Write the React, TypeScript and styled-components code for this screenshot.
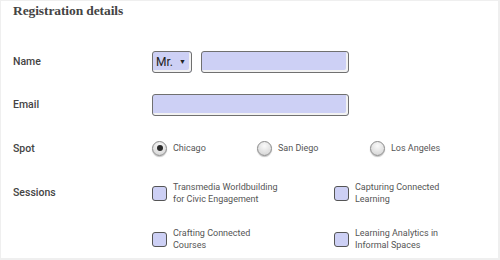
import React from 'react';
import styled, { createGlobalStyle } from 'styled-components';

const GlobalStyle = createGlobalStyle`
    html, body {
        margin: 0;
        padding: 0;
        background-color: #EFEFEF;
    }
    body {
        font-family: Roboto, "Noto Sans", sans-serif;
    }
`;

const Card = styled.div`
    margin: 1px;
    width: 497px;
    height: 257px;
    background-color: #FFFFFF;
    padding-left: 12px;
    box-sizing: border-box;
    overflow: hidden;
`;

const Title = styled.h2`
    margin: 0;
    height: 39px;
    padding-top: 2px;
    box-sizing: border-box;
    font-family: "Liberation Serif", serif;
    font-size: 13.5px;
    letter-spacing: -0.1px;
    font-weight: bold;
    color: #444444;
`;

const Row = styled.div<{ height : number }>`
    display: grid;
    grid-template-columns: 139px 1fr;
    align-items: center;
    height: ${ props => props.height }px;
`;

const Label = styled.div`
    font-size: 10.5px;
    font-weight: 500;
    color: #444444;
`;

const Controls = styled.div`
    display: flex;
    align-items: center;
    gap: 9px;
`;

const Field = styled.div<{ width : number }>`
    width: ${ props => props.width }px;
    height: 22px;
    box-sizing: border-box;
    border: 1.5px solid #707070;
    border-radius: 3px;
    background-color: #CDD0F5;
    box-shadow: inset -2px -2px 0 #F2F2F2;
    display: flex;
    align-items: center;
    padding: 0 5px 0 3px;
    font-size: 12px;
    color: #222222;
`;

const Caret = styled.span`
    margin-left: auto;
    font-size: 7px;
`;

const RadioGroup = styled.div`
    display: grid;
    grid-template-columns: 105px 113px 1fr;
    align-items: center;
`;

const RadioOption = styled.label`
    display: flex;
    align-items: center;
    gap: 6px;
    font-size: 9px;
    color: #555555;
`;

const RadioCircle = styled.span<{ checked : boolean }>`
    width: 15px;
    height: 15px;
    border-radius: 50%;
    box-sizing: border-box;
    border: 1px solid #8A8A8A;
    background: radial-gradient(circle at 50% 30%, #FAFAFA 0%, #DCDCDC 70%, #C4C4C4 100%);
    box-shadow: 0 1px 1px rgba(0, 0, 0, 0.25);
    display: flex;
    align-items: center;
    justify-content: center;

    &::after {
        content: '';
        display: ${ props => props.checked ? 'block' : 'none' };
        width: 6px;
        height: 6px;
        border-radius: 50%;
        background-color: #2A2A2A;
    }
`;

const Sessions = styled.div`
    display: grid;
    grid-template-columns: 182px 1fr;
    row-gap: 22px;
    padding-top: 11px;
`;

const SessionsRow = styled.div`
    display: grid;
    grid-template-columns: 139px 1fr;
    align-items: start;
`;

const SessionLabel = styled(Label)`
    padding-top: 16px;
`;

const Session = styled.label`
    display: flex;
    align-items: center;
    gap: 6px;
    font-size: 9px;
    line-height: 12px;
    color: #555555;
`;

const CheckBox = styled.span`
    flex: none;
    width: 15px;
    height: 15px;
    box-sizing: border-box;
    border: 1.5px solid #555555;
    border-radius: 3px;
    background-color: #CDD0F5;
`;

const spots = [
    { name: 'Chicago', checked: true },
    { name: 'San Diego', checked: false },
    { name: 'Los Angeles', checked: false },
];

const sessions = [
    ['Transmedia Worldbuilding', 'for Civic Engagement'],
    ['Capturing Connected', 'Learning'],
    ['Crafting Connected', 'Courses'],
    ['Learning Analytics in', 'Informal Spaces'],
];

const App = () => (
    <>
        <GlobalStyle />
        <Card>
            <Title>Registration details</Title>
            <Row height={ 43 }>
                <Label>Name</Label>
                <Controls>
                    <Field width={ 40 }>Mr.<Caret>▼</Caret></Field>
                    <Field width={ 148 } />
                </Controls>
            </Row>
            <Row height={ 43 }>
                <Label>Email</Label>
                <Controls>
                    <Field width={ 197 } />
                </Controls>
            </Row>
            <Row height={ 44 }>
                <Label>Spot</Label>
                <RadioGroup>
                    { spots.map(spot => (
                        <RadioOption key={ spot.name }>
                            <RadioCircle checked={ spot.checked } />
                            { spot.name }
                        </RadioOption>
                    )) }
                </RadioGroup>
            </Row>
            <SessionsRow>
                <SessionLabel>Sessions</SessionLabel>
                <Sessions>
                    { sessions.map(lines => (
                        <Session key={ lines[0] }>
                            <CheckBox />
                            <span>{ lines[0] }<br />{ lines[1] }</span>
                        </Session>
                    )) }
                </Sessions>
            </SessionsRow>
        </Card>
    </>
);

export default App;
